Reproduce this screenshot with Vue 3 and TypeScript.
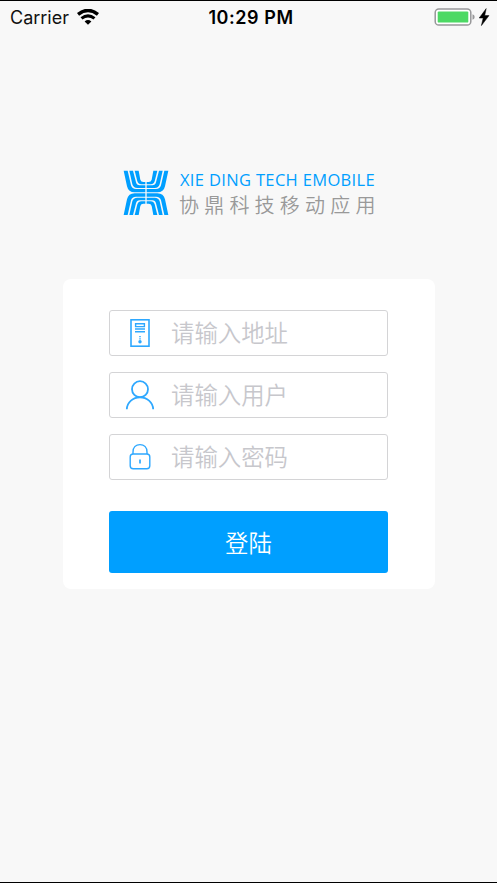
<script setup lang="ts">
import { reactive } from 'vue'

type FieldName = 'address' | 'user' | 'password'

interface Field {
  name: FieldName
  type: string
  placeholder: string
}

const fields: Field[] = [
  { name: 'address', type: 'text', placeholder: '请输入地址' },
  { name: 'user', type: 'text', placeholder: '请输入用户' },
  { name: 'password', type: 'password', placeholder: '请输入密码' },
]

const form = reactive<Record<FieldName, string>>({ address: '', user: '', password: '' })
</script>

<template>
  <main class="screen">
    <header class="status">
      <div class="carrier">
        <span>Carrier</span>
        <svg class="wifi" width="22" height="16" viewBox="0 0 22 16" fill="none" stroke="#000">
          <path d="M1 5.4Q11 -2.4 21 5.4" stroke-width="3.6" />
          <path d="M4.5 9.4Q11 4.2 17.5 9.4" stroke-width="3.1" />
          <path d="M11 15.8L7.6 12.5Q11 9.6 14.4 12.5Z" fill="#000" stroke="none" />
        </svg>
      </div>
      <time class="time">10:29 PM</time>
      <div class="power">
        <svg width="56" height="20" viewBox="0 0 56 20">
          <rect x="1.2" y="2" width="35.6" height="16" rx="3.6" fill="#fff" stroke="#98989a" stroke-width="1.5" />
          <rect x="3.7" y="4.4" width="30.6" height="11.2" rx="1.2" fill="#4cd964" />
          <path d="M38.5 7.2Q40.7 8 40.7 10T38.5 12.8Z" fill="#98989a" />
          <path d="M52.2 1.6L45.2 11H49.2L47.4 18.6L55 8.6H50.7Z" fill="#000" stroke="#000" stroke-width=".5" />
        </svg>
      </div>
    </header>

    <section class="brand">
      <svg class="mark" width="46" height="46" viewBox="0 0 138 138" fill="#009fff">
        <g id="wing">
          <path d="M2 2H14L24 46Q27 57 39 57H67V67H35Q16 67 12 49Z" />
          <path d="M19 2H30L39 37Q41 46 50 46H67V54H43Q31 54 28 43Z" />
          <path d="M35 2H47L52 29Q54 36 61 36H67V43H55Q46 43 43 34Z" />
        </g>
        <use href="#wing" transform="translate(138 0) scale(-1 1)" />
        <use href="#wing" transform="translate(0 137) scale(1 -1)" />
        <use href="#wing" transform="translate(138 137) scale(-1 -1)" />
      </svg>
      <div class="names">
        <span class="english">XIE DING TECH EMOBILE</span>
        <span class="chinese">协鼎科技移动应用</span>
      </div>
    </section>

    <form class="card" @submit.prevent>
      <label v-for="field in fields" :key="field.name" class="field">
        <svg class="icon" width="30" height="32" viewBox="0 0 30 32" fill="none" stroke="#2ea8ff">
          <g v-if="field.name === 'address'">
            <rect x="6" y="2.8" width="18" height="26.4" stroke-width="1.6" />
            <path d="M10.6 6.7H19.4V9.6H10.6ZM10 12H20M10 14.8H20" stroke-width="1.4" />
            <path d="M15 19V23" stroke-width="1.5" stroke-dasharray="1.3 1" />
            <circle cx="15" cy="24.7" r="1.7" fill="#2ea8ff" stroke="none" />
          </g>
          <g v-else-if="field.name === 'user'" stroke-width="1.8">
            <circle cx="15" cy="10.2" r="8" />
            <path d="M1.8 30.2C2.2 23 8 18.4 15 18.4S27.8 23 28.2 30.2" />
          </g>
          <g v-else stroke-width="1.4">
            <rect x="5.2" y="13" width="19.6" height="14.8" rx="3" />
            <path d="M8 13V11C8 6.4 11 3.6 15 3.6S22 6.4 22 11V13" />
            <path d="M15 18.5V22.5" stroke-width="1.7" />
          </g>
        </svg>
        <input v-model="form[field.name]" :type="field.type" :placeholder="field.placeholder" />
      </label>
      <button class="submit" type="submit">登陆</button>
    </form>
  </main>
</template>

<style>
body {
  margin: 0;
}
</style>

<style scoped>
.screen {
  box-sizing: border-box;
  height: 883px;
  border-top: 1px solid #000;
  border-bottom: 1px solid #000;
  background: #f8f8f8;
  font-family: "Liberation Sans", "Noto Sans CJK SC", sans-serif;
}
.status {
  display: grid;
  grid-template-columns: 1fr auto 1fr;
  align-items: center;
  height: 32px;
  padding: 0 7px 0 10px;
  font-family: Inter, sans-serif;
  font-size: 18px;
  color: #111;
}
.carrier {
  display: flex;
  align-items: center;
  gap: 8px;
}
.time {
  padding-left: 2px;
  font-weight: 600;
  font-size: 18px;
  letter-spacing: 0.55px;
  color: #000;
}
.power {
  display: flex;
  justify-content: flex-end;
}
.brand {
  display: flex;
  gap: 11px;
  height: 46px;
  margin: 137px 0 0 123px;
}
.mark {
  flex: none;
}
.names {
  display: flex;
  flex-direction: column;
  white-space: nowrap;
}
.english {
  height: 20px;
  font: 16.5px/19px "Open Sans", sans-serif;
  letter-spacing: 0.34px;
  color: #009fff;
}
.chinese {
  margin-left: -1px;
  font: 350 20px/32px "Noto Sans CJK SC", sans-serif;
  letter-spacing: 5.2px;
  color: #999;
}
.card {
  display: flex;
  flex-direction: column;
  gap: 16px;
  box-sizing: border-box;
  width: 372px;
  height: 310px;
  margin: 63px 0 0 63px;
  padding: 31px 47px 15px 46px;
  border-radius: 8px;
  background: #fff;
}
.field {
  display: flex;
  align-items: center;
  box-sizing: border-box;
  height: 46px;
  padding: 0 15px;
  border: 1.5px solid #d4d4d6;
  border-radius: 3px;
}
.icon {
  flex: none;
}
input {
  flex: 1;
  min-width: 0;
  height: 42px;
  margin: 0 0 2px 16px;
  padding: 0;
  border: 0;
  outline: 0;
  background: transparent;
  font: 350 23.4px/42px "Noto Sans CJK SC", sans-serif;
  color: #333;
}
input::placeholder {
  color: #c7c7cc;
  opacity: 1;
}
.submit {
  height: 62px;
  margin-top: 15px;
  padding: 0;
  border: 0;
  border-radius: 3px;
  background: #009fff;
  font: 350 23.4px/62px "Noto Sans CJK SC", sans-serif;
  color: #fff;
}
</style>
